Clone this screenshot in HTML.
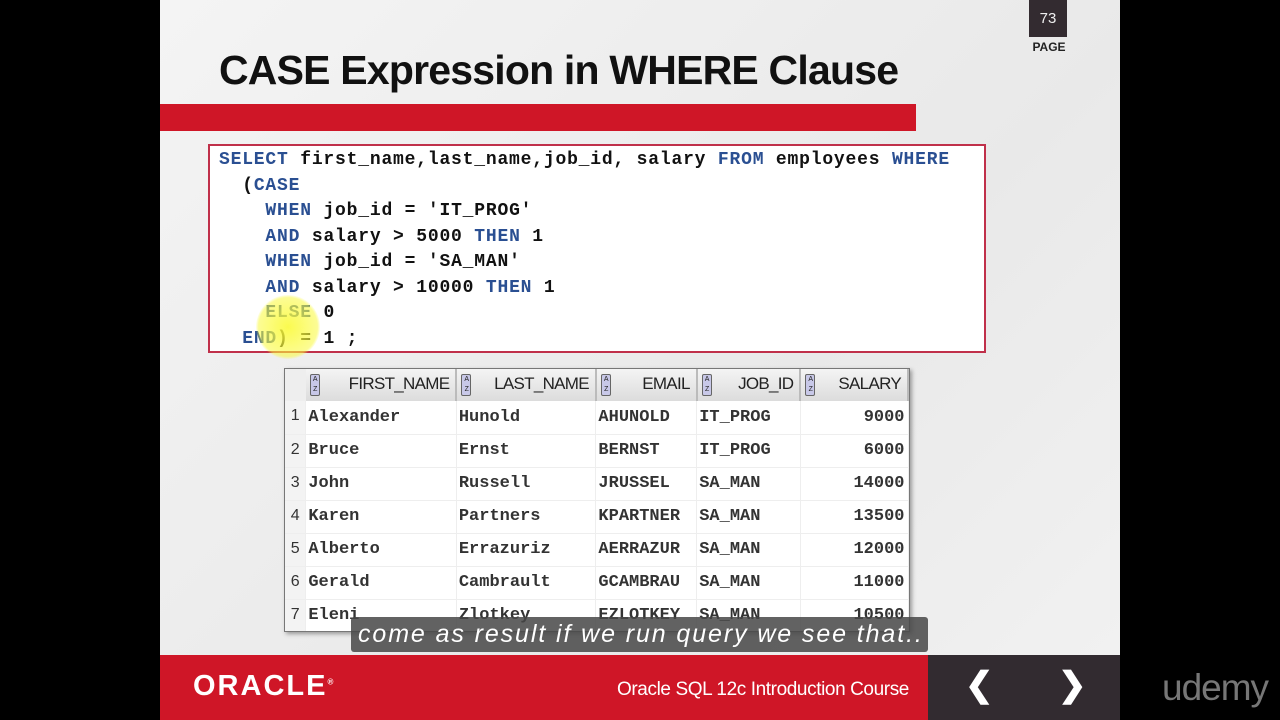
<!DOCTYPE html>
<html><head><meta charset="utf-8"><style>
*{margin:0;padding:0;box-sizing:border-box}
body{width:1280px;height:720px;background:#000;position:relative;overflow:hidden;font-family:"Liberation Sans",sans-serif}
#slide{position:absolute;left:160px;top:0;width:960px;height:720px;background:linear-gradient(135deg,#f4f4f4,#e9e9e9 60%,#f2f2f2)}
.abs{position:absolute}
#title{left:59px;top:47px;font-size:41px;font-weight:bold;color:#111;letter-spacing:-0.8px;white-space:nowrap}
#bar{left:0;top:104px;width:756px;height:27px;background:#cf1627}
#pg{left:869px;top:0;width:38px;height:37px;background:#332b30;color:#eee;font-size:15px;text-align:center;line-height:38px}
#pgl{left:869px;top:40px;width:40px;font-size:12px;font-weight:bold;color:#222;text-align:center}
#code{left:48px;top:144px;width:778px;height:209px;background:#fff;border:2px solid #c0304a;padding:2px 0 0 9px}
#code pre{font-family:"Liberation Mono",monospace;font-size:18px;line-height:25.5px;letter-spacing:0.8px;color:#111;font-weight:bold}
.k{color:#2a4f92}
#hl{left:96px;top:295px;width:64px;height:64px;border-radius:50%;background:radial-gradient(circle,rgba(250,250,60,.9),rgba(250,250,60,.55) 65%,rgba(250,250,60,0) 72%)}
#tbl{left:124px;top:368px;width:626px;height:264px;background:#fff;border:1px solid #777;box-shadow:2px 2px 4px #999;overflow:hidden}
table{border-collapse:collapse;font-family:"Liberation Mono",monospace;font-size:17px;font-weight:bold;color:#333}
th{height:32px;background:linear-gradient(#f4f4f4,#dcdcdc);font-family:"Liberation Sans",sans-serif;font-weight:normal;font-size:17px;text-align:right;padding-right:6px;border-right:2px solid #bbb;color:#222;letter-spacing:-0.7px}
td{height:33px;border-bottom:1px solid #eee;border-right:1px solid #eee;padding-left:2px;white-space:nowrap}
td.n{font-family:"Liberation Sans",sans-serif;font-weight:normal;font-size:16px;text-align:center;background:#f3f3f3;padding:0;vertical-align:top;padding-top:6px}
.ic{display:inline-block;width:10px;height:22px;border:1px solid #666;border-radius:2px;background:#c8c8e8;vertical-align:middle;float:left;margin:0 0 0 4px;font-size:7px;line-height:10px;text-align:center}
#sub{left:191px;top:617px;width:577px;height:35px;background:rgba(70,70,70,.85);color:#fff;font-style:italic;font-size:25px;letter-spacing:1.9px;line-height:34px;padding-left:7px;border-radius:3px;white-space:nowrap;overflow:hidden}
#foot{left:0;top:655px;width:768px;height:65px;background:#cf1627}
#nav{left:768px;top:655px;width:192px;height:65px;background:#322b30;color:#fff;font-size:34px;font-weight:bold}
</style></head><body>
<div id="slide">
<div class="abs" id="title">CASE Expression in WHERE Clause</div>
<div class="abs" id="bar"></div>
<div class="abs" id="pg">73</div>
<div class="abs" id="pgl">PAGE</div>
<div class="abs" id="code"><pre><span class="k">SELECT</span> first_name,last_name,job_id, salary <span class="k">FROM</span> employees <span class="k">WHERE</span>
  (<span class="k">CASE</span>
    <span class="k">WHEN</span> job_id = 'IT_PROG'
    <span class="k">AND</span> salary &gt; 5000 <span class="k">THEN</span> 1
    <span class="k">WHEN</span> job_id = 'SA_MAN'
    <span class="k">AND</span> salary &gt; 10000 <span class="k">THEN</span> 1
    <span class="k">ELSE</span> 0
  <span class="k">END</span>) = 1 ;</pre></div>
<div class="abs" id="hl"></div>
<div class="abs" id="tbl"><table>
<tr><th style="width:21px;background:#eee;border-right:none"></th><th style="width:151px"><span class="ic">A<br>Z</span>FIRST_NAME</th><th style="width:140px"><span class="ic">A<br>Z</span>LAST_NAME</th><th style="width:101px"><span class="ic">A<br>Z</span>EMAIL</th><th style="width:104px"><span class="ic">A<br>Z</span>JOB_ID</th><th style="width:108px"><span class="ic">A<br>Z</span>SALARY</th></tr>
<tr><td class="n">1</td><td>Alexander</td><td>Hunold</td><td>AHUNOLD</td><td>IT_PROG</td><td style="text-align:right;padding-right:3px">9000</td></tr>
<tr><td class="n">2</td><td>Bruce</td><td>Ernst</td><td>BERNST</td><td>IT_PROG</td><td style="text-align:right;padding-right:3px">6000</td></tr>
<tr><td class="n">3</td><td>John</td><td>Russell</td><td>JRUSSEL</td><td>SA_MAN</td><td style="text-align:right;padding-right:3px">14000</td></tr>
<tr><td class="n">4</td><td>Karen</td><td>Partners</td><td>KPARTNER</td><td>SA_MAN</td><td style="text-align:right;padding-right:3px">13500</td></tr>
<tr><td class="n">5</td><td>Alberto</td><td>Errazuriz</td><td>AERRAZUR</td><td>SA_MAN</td><td style="text-align:right;padding-right:3px">12000</td></tr>
<tr><td class="n">6</td><td>Gerald</td><td>Cambrault</td><td>GCAMBRAU</td><td>SA_MAN</td><td style="text-align:right;padding-right:3px">11000</td></tr>
<tr><td class="n">7</td><td>Eleni</td><td>Zlotkey</td><td>EZLOTKEY</td><td>SA_MAN</td><td style="text-align:right;padding-right:3px">10500</td></tr>
</table></div>
<div class="abs" id="foot">
<div class="abs" style="left:33px;top:15px;color:#fff;font-size:29px;font-weight:bold;letter-spacing:2px">ORACLE<sup style="font-size:8px">®</sup></div>
<div class="abs" style="left:457px;top:24px;color:#fff;font-size:19px;letter-spacing:-0.4px">Oracle SQL 12c Introduction Course</div>
</div>
<div class="abs" id="nav"><span class="abs" style="left:37px;top:10px">&#10094;</span><span class="abs" style="left:130px;top:10px">&#10095;</span></div>
<div class="abs" id="sub">come as result if we run query we see that..</div>
</div>
<div class="abs" style="left:1162px;top:667px;color:#777;font-size:37px;letter-spacing:-1px">udemy</div>
</body></html>
